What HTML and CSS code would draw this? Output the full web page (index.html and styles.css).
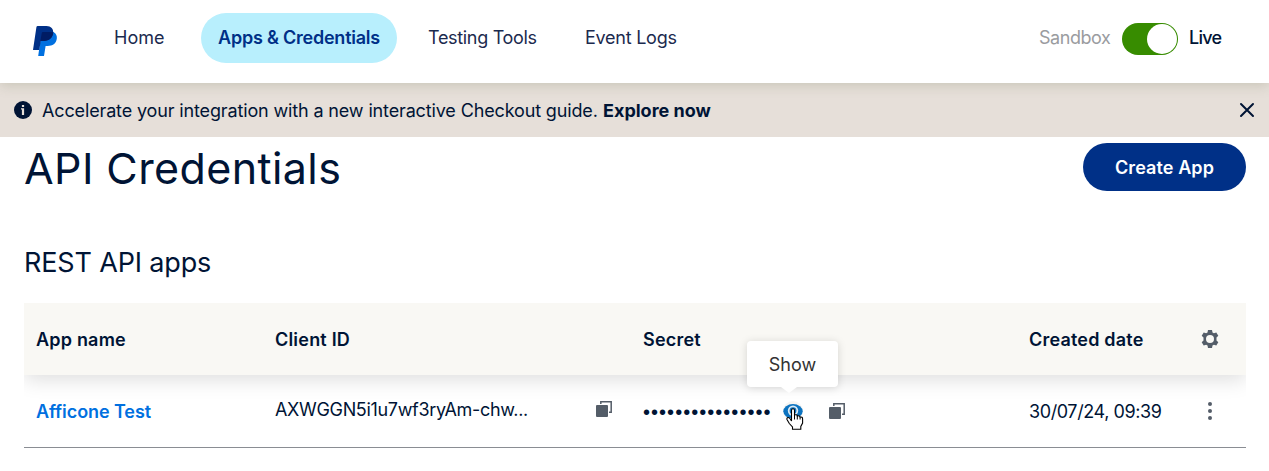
FILE: index.html
```html
<!DOCTYPE html>
<html lang="en">
<head>
<meta charset="utf-8">
<title>API Credentials</title>
<link rel="stylesheet" href="styles.css">
</head>
<body>
<header class="topbar">
  <svg class="logo" width="24" height="30" viewBox="0 0 24 30">
    <path fill="#0070e0" d="M8.6 6H20.4C23.3 7.6 24.2 10 23.8 12.8C23 17.6 19.6 20 14.6 20H12.6L11 30H5.2z"/>
    <path fill="#003087" d="M4.7 0H13.5C18 0 20.7 3 20.2 7.1C19.5 12 16 15 11 15H7.8L6.2 24H0L3.4 1.3Q3.6 0 4.7 0z"/>
    <path fill="#001c64" d="M9.9 6H17Q19.6 6 20.3 6.6C19.7 12 16 15 11 15H7.4L8.7 7.2Q8.9 6 9.9 6z"/>
  </svg>
  <nav class="nav">
    <a class="nav-home">Home</a>
    <a class="nav-apps">Apps &amp; Credentials</a>
    <a class="nav-tools">Testing Tools</a>
    <a class="nav-logs">Event Logs</a>
  </nav>
  <div class="mode">
    <span class="sandbox">Sandbox</span>
    <span class="toggle"><span class="knob"></span></span>
    <span class="live">Live</span>
  </div>
</header>
<section class="banner">
  <svg width="18" height="18" viewBox="0 0 18 18"><circle cx="9" cy="9" r="9" fill="#001435"/><path fill="#e6dfd9" d="M7.9 4h2.2v2H7.9zM7 7.2h3.1V14H7.9V8.4H7z"/></svg>
  <p class="banner-text">Accelerate your integration with a new interactive Checkout guide.</p>
  <b class="explore">Explore now</b>
  <svg class="close" width="14" height="14" viewBox="0 0 14 14"><path d="M1 1l12 12M13 1L1 13" stroke="#001435" stroke-width="2" stroke-linecap="round"/></svg>
</section>
<main class="content">
  <div class="title-row">
    <h1>API Credentials</h1>
    <button class="create">Create App</button>
  </div>
  <h2>REST API apps</h2>
  <div class="table">
    <div class="row head">
      <span class="h-name">App name</span>
      <span class="h-client">Client ID</span>
      <span class="h-secret">Secret</span>
      <span class="h-date">Created date</span>
      <span class="action"><svg width="18" height="18" viewBox="0 0 18 18"><path fill="#545d68" fill-rule="evenodd" d="M7 0h4l.5 2.4 1.4.8 2.4-.8 2 3.4-1.8 1.7v3l1.8 1.7-2 3.4-2.4-.8-1.4.8L11 18H7l-.5-2.4-1.4-.8-2.4.8-2-3.4 1.8-1.7v-3L.7 5.8l2-3.4 2.4.8 1.4-.8zM9 5a4 4 0 1 0 0 8a4 4 0 0 0 0-8z"/></svg></span>
    </div>
    <div class="row item">
      <a class="app-link">Afficone Test</a>
      <span class="client"><span class="client-id">AXWGGN5i1u7wf3ryAm-chw...</span>
        <svg class="copy" width="16" height="16" viewBox="0 0 16 16"><path d="M4.8.8h10.4v10.4H4.8z" fill="none" stroke="#545d68" stroke-width="1.5"/><path d="M3 3h10v10H3z" fill="#fff"/><rect y="4" width="12" height="12" rx="1" fill="#545d68"/></svg>
      </span>
      <span class="secret">
        <span class="dots">••••••••••••••••</span>
        <span class="reveal">
          <svg width="20" height="20" viewBox="0 0 20 20"><circle cx="10" cy="10" r="10" fill="#f7f5f2"/><ellipse cx="10" cy="10.3" rx="9.7" ry="7.3" fill="#0c73c0"/><circle cx="10" cy="9.7" r="5.2" fill="#dcebf5"/><circle cx="10" cy="9.7" r="3.4" fill="#0c73c0"/></svg>
          <svg class="cursor" width="18" height="22" viewBox="0 0 18 22"><path d="M5.5 13V2.2Q5.5.7 7 .7T8.5 2.2V7Q10.8 6.2 11.3 8Q13.6 7.3 14.1 9Q16.6 8.6 16.6 11V15L14.8 18.5V21.3H6.5V19L3.3 15.5L1 11.5Q.5 9.8 2 9.5Q3.5 9.2 5.5 13z" fill="#fff" stroke="#000" stroke-width="1.1"/><path d="M8.5 7v4.5M11.3 8v3.5M14.1 9v2.5" stroke="#000" fill="none"/></svg>
          <span class="tooltip">Show</span>
        </span>
        <svg class="copy" width="16" height="16" viewBox="0 0 16 16"><path d="M4.8.8h10.4v10.4H4.8z" fill="none" stroke="#545d68" stroke-width="1.5"/><path d="M3 3h10v10H3z" fill="#fff"/><rect y="4" width="12" height="12" rx="1" fill="#545d68"/></svg>
      </span>
      <span class="date">30/07/24, 09:39</span>
      <span class="action"><svg width="4" height="18" viewBox="0 0 4 18"><g fill="#545d68"><circle cx="2" cy="2" r="2"/><circle cx="2" cy="9" r="2"/><circle cx="2" cy="16" r="2"/></g></svg></span>
    </div>
  </div>
</main>
</body>
</html>
```

FILE: styles.css
```css
* { box-sizing: border-box; }
body { margin: 0; background: #fff; color: #001435; font: 18px/24px Inter, "Liberation Sans", sans-serif; overflow: hidden; white-space: nowrap; }
h1, h2, p { margin: 0; font-weight: 400; }
svg { display: block; flex: none; overflow: visible; }

.topbar { position: relative; height: 83px; padding: 0 48px 8px 33px; display: flex; align-items: center; background: #fff; box-shadow: 0 2px 12px rgba(90, 100, 60, .22); }
.logo { margin-top: 6px; }
.nav { display: flex; align-items: center; margin-left: 57px; color: #1b2a4e; }
.nav-home { width: 87px; }
.nav-apps { width: 196px; height: 50px; padding: 13px 0 0 17px; border-radius: 25px; background: #b8effd; color: #003087; font-weight: 600; letter-spacing: -.22px; }
.nav-tools { width: 157px; margin-left: 31px; letter-spacing: -.32px; }
.nav-logs { letter-spacing: -.25px; }
.mode { margin-left: auto; display: flex; align-items: center; }
.sandbox { width: 83px; color: #9a9c9f; letter-spacing: -.45px; }
.toggle { width: 56px; height: 32px; margin-top: 3px; padding: 1px; border-radius: 16px; background: #378c00; }
.knob { display: block; width: 30px; height: 30px; margin-left: auto; border-radius: 50%; background: #fff; }
.live { width: 32px; margin-left: 11px; font-weight: 500; letter-spacing: -.7px; padding-top: 1px; }

.banner { height: 54px; padding: 0 15px 0 14px; display: flex; align-items: center; background: #e6dfd9; }
.banner-text { margin-left: 10px; padding-top: 2px; width: 561px; letter-spacing: -.14px; }
.explore { padding-top: 2px; font-weight: 700; }
.close { margin-left: auto; }

.content { padding: 6px 23px 0 24px; }
.title-row { height: 48px; display: flex; justify-content: space-between; align-items: center; }
h1 { font-size: 43px; line-height: 52px; margin-top: 1px; letter-spacing: .4px; }
.create { width: 163px; height: 48px; padding: 2px 0 0; border: 0; border-radius: 24px; background: #003087; color: #fff; font: 600 18px/24px Inter, sans-serif; letter-spacing: .1px; }
h2 { margin-top: 55px; font-size: 27px; line-height: 34px; letter-spacing: -.15px; }

.table { margin-top: 23px; overflow: hidden; }
.row { display: grid; grid-template-columns: 239px 368px 386px 157px 72px; align-items: center; height: 72px; }
.row > * { padding-left: 12px; }
.row > .action { padding: 0; display: flex; justify-content: center; }
.head { background: #f9f8f4; font-weight: 600; letter-spacing: .2px; box-shadow: 0 4px 20px rgba(0, 0, 0, .14); }
.row > .h-name, .row > .h-client, .row > .h-secret, .row > .h-date, .row > .app-link, .row > .date { padding-top: 2px; }
.item { height: 73px; border-bottom: 1px solid #8a8d93; }
.app-link { color: #0070e0; font-weight: 600; letter-spacing: -.08px; }
.client, .secret { display: flex; align-items: center; }
.client { padding-bottom: 4px; }
.client-id { padding-top: 2px; letter-spacing: -.33px; }
.client .copy { margin-left: auto; margin-right: 19px; }
.dots { width: 140px; padding-top: 1px; font: 20px/24px "Liberation Sans", sans-serif; letter-spacing: 1.03px; }
.date { letter-spacing: -.4px; }
.reveal { position: relative; }
.cursor { position: absolute; left: 3px; top: 7px; }
.tooltip { position: absolute; left: -36px; top: -60px; width: 91px; height: 46px; line-height: 48px; text-align: center; border-radius: 4px; background: #fff; color: #333; box-shadow: 0 1px 8px rgba(0, 0, 0, .15); }
.tooltip::after { content: ""; position: absolute; left: 34px; top: 46px; border: 8px solid transparent; border-top: 6px solid #fff; border-bottom: 0; }
.secret .copy { margin-left: 26px; }
```
